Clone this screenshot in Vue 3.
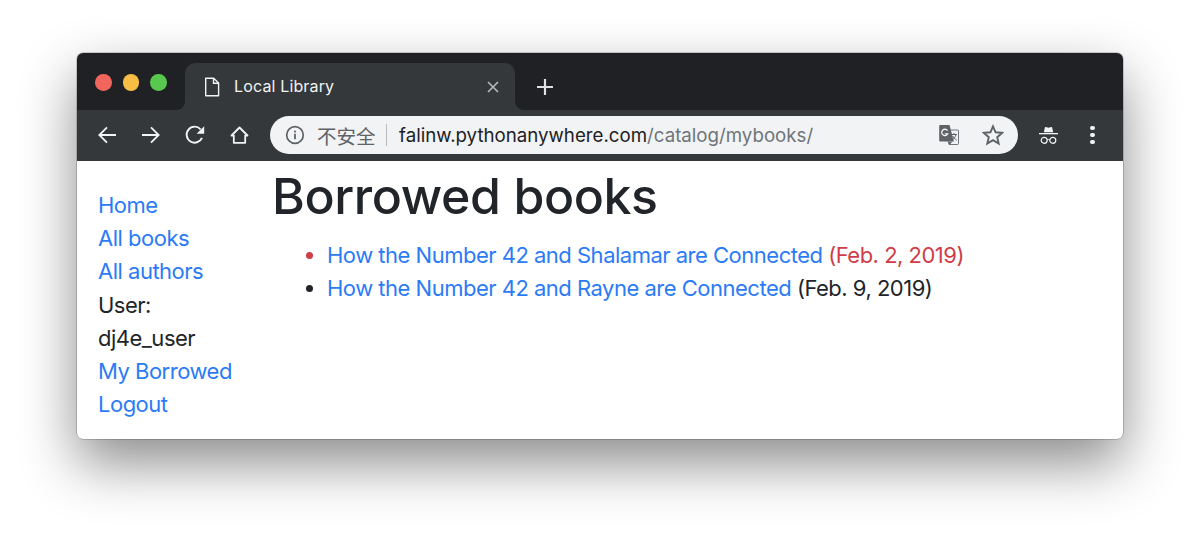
<script setup>
const nav = [
  { label: 'Home', link: true },
  { label: 'All books', link: true },
  { label: 'All authors', link: true },
  { label: 'User:', link: false },
  { label: 'dj4e_user', link: false },
  { label: 'My Borrowed', link: true },
  { label: 'Logout', link: true },
]
</script>

<template>
  <div class="page">
    <div class="window">
      <div class="titlebar">
        <div class="lights">
          <span class="light red"></span>
          <span class="light yellow"></span>
          <span class="light green"></span>
        </div>
        <div class="tab">
          <svg class="doc" width="16" height="20" viewBox="0 0 16 20" fill="none" stroke="#f1f3f4" stroke-width="1.4">
            <path d="M1.700 1.200h8L14.600 6v12.800H1.700z" stroke-linejoin="round" />
            <path d="M9.500 1.200v5H14.600" />
          </svg>
          <span class="tab-title">Local Library</span>
          <svg class="close" width="12" height="12" viewBox="0 0 12 12" stroke="#b4b7ba" stroke-width="1.7">
            <path d="M1 1l10 10M11 1L1 11" />
          </svg>
        </div>
        <svg class="plus" width="18" height="18" viewBox="0 0 18 18" stroke="#dfe1e3" stroke-width="2.2">
          <path d="M9 1v16M1 9h16" />
        </svg>
      </div>
      <div class="toolbar">
        <div class="nav-icons">
          <svg width="20" height="20" viewBox="0 0 20 20" fill="none" stroke="#f1f3f4" stroke-width="1.8">
            <path d="M19 10H2.500M10 2.300L2.300 10l7.700 7.700" />
          </svg>
          <svg width="20" height="20" viewBox="0 0 20 20" fill="none" stroke="#f1f3f4" stroke-width="1.8">
            <path d="M1 10h16.500M10 2.300L17.700 10 10 17.700" />
          </svg>
          <svg width="20" height="20" viewBox="0 0 20 20" fill="none">
            <path d="M17 12.800A8 8 0 1 1 15.600 4.300" stroke="#f1f3f4" stroke-width="1.900" />
            <path d="M19.200 1.200v7.600h-7.600z" fill="#f1f3f4" />
          </svg>
          <svg width="20" height="20" viewBox="0 0 20 20" fill="none" stroke="#f1f3f4" stroke-width="1.800">
            <path d="M2.500 10.500L10.500 2.500l8 8h-2.300v7.300H4.800v-7.300z" stroke-linejoin="round" />
          </svg>
        </div>
        <div class="omnibox">
          <svg class="info" width="20" height="20" viewBox="0 0 20 20" fill="none">
            <circle cx="10" cy="10" r="8.300" stroke="#5f6368" stroke-width="1.700" />
            <rect x="9.100" y="8.800" width="1.800" height="5.400" fill="#5f6368" />
            <rect x="9.100" y="5.600" width="1.800" height="1.900" fill="#5f6368" />
          </svg>
          <span class="insecure">不安全</span>
          <span class="sep"></span>
          <span class="url"><span class="host">falinw.pythonanywhere.com</span><span class="path">/catalog/mybooks/</span></span>
          <svg class="translate" width="20" height="20" viewBox="0 0 20 20">
            <path d="M7 5h11.500a1 1 0 0 1 1 1v12.500a1 1 0 0 1-1 1H10z" fill="#f1f3f4" stroke="#70757a" stroke-width="1" />
            <path d="M1.200 0h9.300l4.400 16.500H1.200a1 1 0 0 1-1-1V1a1 1 0 0 1 1-1z" fill="#5f6368" />
            <path d="M9.300 17l1.300 3 2.700-3.500z" fill="#5f6368" />
            <path d="M8.500 5.600A3.200 3.200 0 1 0 8.800 8.800H5.800" fill="none" stroke="#f1f3f4" stroke-width="1.300" />
            <path d="M12.500 9.500h5.500M15 8v1.500M17 9.500c-.6 2.500-2 4.500-4 5.800M13.800 11c.7 1.700 2.200 3.200 4 4.200" fill="none" stroke="#5f6368" stroke-width="1" />
          </svg>
          <svg class="star" width="22" height="22" viewBox="0 0 22 22" fill="none" stroke="#5f6368" stroke-width="1.900">
            <path d="M11 2.300l2.600 6 6.500.6-4.900 4.300 1.500 6.400L11 16.200l-5.700 3.400 1.500-6.400L1.900 8.900l6.500-.6z" stroke-linejoin="miter" />
          </svg>
        </div>
        <svg class="incognito" width="20" height="18" viewBox="0 0 20 18">
          <path d="M4.800 6.300L5.900 1.500q.2-.7.900-.5L9.500 1.700 12.200 1q.7-.2.900.5l1.100 4.800z" fill="#f1f3f4" />
          <rect x="0" y="7" width="19" height="1.300" fill="#f1f3f4" />
          <circle cx="5.200" cy="14.300" r="3" fill="none" stroke="#f1f3f4" stroke-width="1.200" />
          <circle cx="13.800" cy="14.300" r="3" fill="none" stroke="#f1f3f4" stroke-width="1.200" />
          <path d="M8.200 13.800q1.300-.6 2.600 0" fill="none" stroke="#f1f3f4" stroke-width="1" />
        </svg>
        <div class="kebab"><i></i><i></i><i></i></div>
      </div>
      <div class="content">
        <nav class="sidebar">
          <template v-for="item in nav" :key="item.label">
            <a v-if="item.link" class="nav-item link">{{ item.label }}</a>
            <span v-else class="nav-item">{{ item.label }}</span>
          </template>
        </nav>
        <main class="main">
          <h1>Borrowed books</h1>
          <ul>
            <li class="overdue"><a class="link">How the Number 42 and Shalamar are Connected</a> (Feb. 2, 2019)</li>
            <li><a class="link">How the Number 42 and Rayne are Connected</a> (Feb. 9, 2019)</li>
          </ul>
        </main>
      </div>
    </div>
  </div>
</template>

<style>
html, body { margin: 0; background: #fff; }
</style>

<style scoped>
.page {
  width: 1200px;
  height: 541px;
  box-sizing: border-box;
  padding: 53px 77px 0;
  overflow: hidden;
  font-family: Inter, "Noto Sans CJK SC", sans-serif;
}
.window {
  width: 1046px;
  height: 386px;
  border-radius: 6px;
  overflow: hidden;
  background: #fff;
  box-shadow: 0 0 0 .5px rgba(0,0,0,.35), 0 24px 56px rgba(0,0,0,.46);
}
.titlebar {
  height: 57px;
  background: #202124;
  display: flex;
  align-items: flex-end;
  box-sizing: border-box;
}
.lights {
  width: 108px;
  height: 47px;
  box-sizing: border-box;
  padding: 11px 0 0 18px;
  display: flex;
  gap: 11px;
  flex: none;
  align-self: flex-end;
}
.light { width: 16.500px; height: 16.500px; border-radius: 50%; }
.red { background: #f1655c; }
.yellow { background: #f7bd45; }
.green { background: #58c84f; }
.tab {
  position: relative;
  width: 330px;
  height: 47px;
  background: #35383b;
  border-radius: 10px 10px 0 0;
  display: flex;
  align-items: center;
  box-sizing: border-box;
  padding: 0 16px 0 19px;
  color: #f1f3f4;
  flex: none;
}
.tab::before, .tab::after {
  content: "";
  position: absolute;
  bottom: 0;
  width: 8px;
  height: 8px;
}
.tab::before {
  left: -8px;
  background: radial-gradient(circle at 0 0, transparent 7.500px, #35383b 8px);
}
.tab::after {
  right: -8px;
  background: radial-gradient(circle at 100% 0, transparent 7.500px, #35383b 8px);
}
.tab-title {
  font-size: 16px;
  letter-spacing: .15px;
  margin: 0 0 1px 14px;
  flex: 1;
}
.plus { margin: 0 0 14px 21px; }
.toolbar {
  height: 51px;
  background: #35383b;
  display: flex;
  align-items: center;
  box-sizing: border-box;
  padding: 0 0 1px 20px;
}
.nav-icons { display: flex; gap: 24px; width: 173px; flex: none; }
.omnibox {
  width: 748px;
  height: 38px;
  border-radius: 19px;
  background: #f1f3f4;
  display: flex;
  align-items: center;
  box-sizing: border-box;
  padding-left: 15px;
  flex: none;
  font-size: 18.700px;
}
.insecure { color: #5f6368; font-size: 19.500px; margin-left: 12px; }
.sep { width: 1.500px; height: 22px; background: #b8babd; margin: 0 12px 0 10px; flex: none; }
.url { flex: 1; white-space: nowrap; }
.host { color: #202124; }
.path { color: #70757a; }
.translate { margin-right: 23px; flex: none; }
.star { margin-right: 14px; flex: none; }
.incognito { margin-left: 21px; flex: none; }
.kebab {
  margin-left: 31px;
  display: flex;
  flex-direction: column;
  gap: 2.500px;
}
.kebab i { width: 4.500px; height: 4.500px; border-radius: 50%; background: #f1f3f4; }
.content {
  display: flex;
  font-size: 22px;
  line-height: 33px;
  letter-spacing: -.5px;
  color: #212529;
}
.sidebar {
  width: 195px;
  box-sizing: border-box;
  padding: 28px 0 0 21px;
  line-height: 33.170px;
  display: flex;
  flex-direction: column;
  flex: none;
}
.link { color: #2b7bf6; }
h1 {
  margin: 6px 0 14px;
  font-size: 50px;
  line-height: 58px;
  font-weight: 500;
  letter-spacing: -.4px;
  color: #212529;
}
ul { margin: 0; padding: 0 0 0 55px; }
.overdue { color: #cf3d48; }
</style>
